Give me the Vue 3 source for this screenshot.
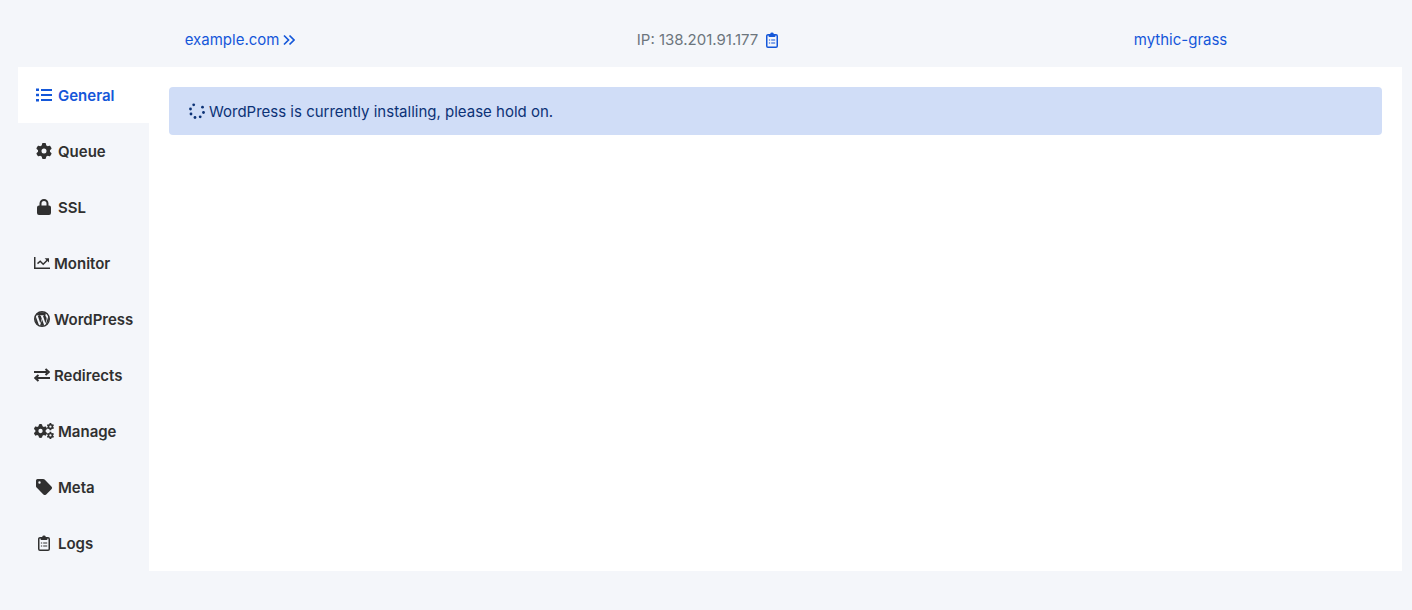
<script setup>
import { ref } from 'vue'

const gear =
  'M495.9 166.6c3.2 8.7 .5 18.4-6.4 24.6l-43.3 39.4c1.1 8.3 1.7 16.8 1.7 25.4s-.6 17.1-1.7 25.4l43.3 39.4c6.9 6.2 9.6 15.9 6.4 24.6c-4.4 11.9-9.7 23.3-15.8 34.3l-4.7 8.1c-6.6 11-14 21.4-22.1 31.2c-5.9 7.2-15.7 9.6-24.5 6.8l-55.7-17.7c-13.4 10.3-28.2 18.9-44 25.4l-12.5 57.1c-2 9.1-9 16.3-18.2 17.8c-13.8 2.3-28 3.5-42.5 3.5s-28.7-1.2-42.5-3.5c-9.2-1.5-16.2-8.7-18.2-17.8l-12.5-57.1c-15.8-6.5-30.6-15.1-44-25.4L83.1 425.9c-8.8 2.8-18.6 .3-24.5-6.8c-8.1-9.8-15.5-20.2-22.1-31.2l-4.7-8.1c-6.1-11-11.4-22.4-15.8-34.3c-3.2-8.7-.5-18.4 6.4-24.6l43.3-39.4C64.6 273.1 64 264.6 64 256s.6-17.1 1.7-25.4L22.4 191.2c-6.9-6.2-9.6-15.9-6.4-24.6c4.4-11.9 9.7-23.3 15.8-34.3l4.7-8.1c6.6-11 14-21.4 22.1-31.2c5.9-7.2 15.7-9.6 24.5-6.8l55.7 17.7c13.4-10.3 28.2-18.9 44-25.4l12.5-57.1c2-9.1 9-16.3 18.2-17.8C227.3 1.2 241.5 0 256 0s28.7 1.2 42.5 3.5c9.2 1.5 16.2 8.7 18.2 17.8l12.5 57.1c15.8 6.5 30.6 15.1 44 25.4l55.7-17.7c8.8-2.8 18.6-.3 24.5 6.8c8.1 9.8 15.5 20.2 22.1 31.2l4.7 8.1c6.1 11 11.4 22.4 15.8 34.3zM256 336a80 80 0 1 0 0-160 80 80 0 1 0 0 160z'

const clipboard = [
  { d: 'M4 2.75h8a1.25 1.25 0 0 1 1.25 1.25v10A1.25 1.25 0 0 1 12 15.25H4A1.25 1.25 0 0 1 2.75 14V4A1.25 1.25 0 0 1 4 2.75z', line: true, w: 1.5 },
  { d: 'M4.5 2h1.6a2 2 0 0 1 3.8 0h1.6v2a1 1 0 0 1-1 1h-5a1 1 0 0 1-1-1z' },
  { d: 'M4.9 8h1.3M7.2 8h4M4.9 11h1.3M7.2 11h4', line: true, w: 1 },
]

const tabs = [
  {
    label: 'General',
    wide: true,
    box: '0 0 16 16',
    shapes: [{ d: 'M0 1.5h3v2.6H0zM0 6.7h3v2.6H0zM0 11.9h3v2.6H0zM5 2h11v2H5zM5 7h11v2H5zM5 12h11v2H5z' }],
  },
  { label: 'Queue', wide: true, box: '0 0 512 512', shapes: [{ d: gear }] },
  {
    label: 'SSL',
    wide: true,
    box: '0 0 16 16',
    shapes: [
      { d: 'M4.5 7V4.5a3.5 3.5 0 0 1 7 0V7', line: true, w: 2 },
      { d: 'M3 6.5h10a2 2 0 0 1 2 2V14a2 2 0 0 1-2 2H3a2 2 0 0 1-2-2V8.5a2 2 0 0 1 2-2z' },
    ],
  },
  {
    label: 'Monitor',
    box: '0 0 16 16',
    shapes: [
      { d: 'M.75 2v11.25H16', line: true, w: 1.5 },
      { d: 'M3.5 8.6 6.2 6.2 9.2 9.2 13.2 5.2', line: true, w: 1.5 },
      { d: 'M10.6 3.2H15v4.4z' },
    ],
  },
  {
    label: 'WordPress',
    box: '0 0 16 16',
    shapes: [
      { d: 'M12.633 7.653c0-.848-.305-1.435-.566-1.892l-.08-.13c-.317-.51-.594-.958-.594-1.48 0-.63.478-1.218 1.152-1.218.02 0 .039.002.058.003l.031.003A6.84 6.84 0 0 0 8 1.137 6.86 6.86 0 0 0 2.266 4.23c.16.005.313.009.442.009.717 0 1.828-.087 1.828-.087.37-.022.414.521.044.565 0 0-.371.044-.785.065l2.5 7.434 1.5-4.506-1.07-2.929c-.369-.022-.719-.065-.719-.065-.37-.022-.326-.588.043-.566 0 0 1.134.087 1.808.087.718 0 1.83-.087 1.83-.087.37-.022.413.522.043.566 0 0-.372.043-.785.065l2.48 7.377.684-2.287.054-.173c.27-.86.469-1.495.469-2.046zM1.137 8a6.86 6.86 0 0 0 3.868 6.176L1.73 5.206A6.8 6.8 0 0 0 1.137 8' },
      { d: 'M6.061 14.583 8.121 8.6l2.109 5.78q.02.05.049.094a6.85 6.85 0 0 1-4.218.109m7.96-9.876q.046.328.047.706c0 .696-.13 1.479-.522 2.458l-2.096 6.06a6.86 6.86 0 0 0 2.572-9.224z' },
      { d: 'M8 .7a7.3 7.3 0 1 0 0 14.6 7.3 7.3 0 1 0 0-14.6z', line: true, w: 1.4 },
    ],
  },
  {
    label: 'Redirects',
    box: '0 0 16 16',
    shapes: [
      { d: 'M0 5h13M3 11h13', line: true, w: 2 },
      { d: 'M11.5 2 14.8 5l-3.3 3M4.5 8 1.2 11l3.3 3', line: true, w: 2 },
    ],
  },
  {
    label: 'Manage',
    wide: true,
    box: '0 0 20 16',
    shapes: [
      { d: gear, at: 'translate(-.4 1.1) scale(.027)' },
      { d: gear, at: 'translate(12.8 0) scale(.0142)' },
      { d: gear, at: 'translate(12.8 8.8) scale(.0142)' },
    ],
  },
  {
    label: 'Meta',
    wide: true,
    box: '0 0 16 16',
    shapes: [{ d: 'M0 1.5A1.5 1.5 0 0 1 1.5 0h5.7a2 2 0 0 1 1.4.6l6.8 6.8a2 2 0 0 1 0 2.8l-5.2 5.2a2 2 0 0 1-2.8 0L.6 8.6A2 2 0 0 1 0 7.2zM3.5 2.3a1.2 1.2 0 1 0 0 2.4 1.2 1.2 0 1 0 0-2.4z' }],
  },
  { label: 'Logs', wide: true, box: '0 0 16 16', shapes: clipboard },
]

const active = ref('General')
</script>

<template>
  <div class="page">
    <header class="top">
      <a class="site" href="#site">example.com
        <svg class="chevrons" viewBox="0 0 12 16" aria-hidden="true">
          <path class="line" stroke-width="1.7" d="M1 3.5 5.5 8 1 12.5M6.5 3.5 11 8l-4.5 4.5" />
        </svg>
      </a>
      <div class="ip">
        <span>IP: 138.201.91.177</span>
        <button class="copy" type="button" aria-label="Copy IP address">
          <svg class="icon" viewBox="0 0 16 16" aria-hidden="true">
            <path v-for="s in clipboard" :key="s.d" :d="s.d" :class="{ line: s.line }" :stroke-width="s.w" />
          </svg>
        </button>
      </div>
      <a class="server" href="#server">mythic-grass</a>
    </header>

    <div class="body">
      <nav class="tabs" aria-label="Site sections">
        <button
          v-for="t in tabs"
          :key="t.label"
          type="button"
          class="tab"
          :class="{ active: active === t.label }"
          @click="active = t.label"
        >
          <svg class="icon" :class="{ wide: t.wide }" :viewBox="t.box" aria-hidden="true">
            <path
              v-for="(s, i) in t.shapes"
              :key="i"
              :d="s.d"
              :class="{ line: s.line }"
              :stroke-width="s.w"
              :transform="s.at"
              fill-rule="evenodd"
            />
          </svg>
          <span class="label">{{ t.label }}</span>
        </button>
      </nav>
      <main class="panel">
        <div class="notice" role="status">
          <svg class="icon" viewBox="0 0 16 16" aria-hidden="true">
            <circle cx="4.7" cy="1.8" r="1.4" />
            <circle cx="1.5" cy="6" r="1.4" />
            <circle cx="2" cy="11" r="1.4" />
            <circle cx="6" cy="14.5" r="1.4" />
            <circle cx="11.2" cy="13.8" r="1.4" />
            <circle cx="14.5" cy="9.5" r="1.4" />
            <circle cx="13.5" cy="4.2" r="1.4" />
          </svg>
          <span class="label">WordPress is currently installing, please hold on.</span>
        </div>
      </main>
    </div>
  </div>
</template>

<style>
body {
  background: #f4f6fa;
}
</style>

<style scoped>
.page {
  padding: 12px 10px 40px 18px;
  font-family: Inter, "Liberation Sans", sans-serif;
  font-size: 15px;
  line-height: 24px;
  color: #303030;
}
.top {
  display: flex;
  justify-content: space-around;
  align-items: center;
  min-height: 55px;
  color: #6c757d;
}
a {
  color: #1457d9;
  text-decoration: none;
}
.site,
.server {
  padding-right: 8px;
}
.site,
.ip,
.tab,
.notice {
  display: flex;
  align-items: center;
  gap: 4px;
}
.ip {
  gap: 6px;
  padding-right: 20px;
}
.label {
  padding-top: 2px;
  line-height: 22px;
}
button {
  font: inherit;
  border: 0;
  background: none;
  cursor: pointer;
}
.copy {
  display: flex;
  padding: 0;
  color: #1457d9;
}
svg {
  flex: none;
  height: 16px;
  fill: currentColor;
}
.icon {
  width: 16px;
}
.icon.wide {
  width: 20px;
}
.chevrons {
  width: 12px;
}
.line {
  fill: none;
  stroke: currentColor;
}
.body {
  display: flex;
}
.tabs {
  display: flex;
  flex-direction: column;
  flex: none;
  width: 131px;
}
.tab {
  padding: 16px;
  color: inherit;
  font-weight: 600;
  text-align: left;
}
.tab.active {
  background: #fff;
  color: #1457d9;
}
.panel {
  flex: 1;
  padding: 20px;
  background: #fff;
}
.notice {
  padding: 12px 20px;
  border-radius: 4px;
  background: #d0ddf7;
  color: #0c3276;
}
</style>
